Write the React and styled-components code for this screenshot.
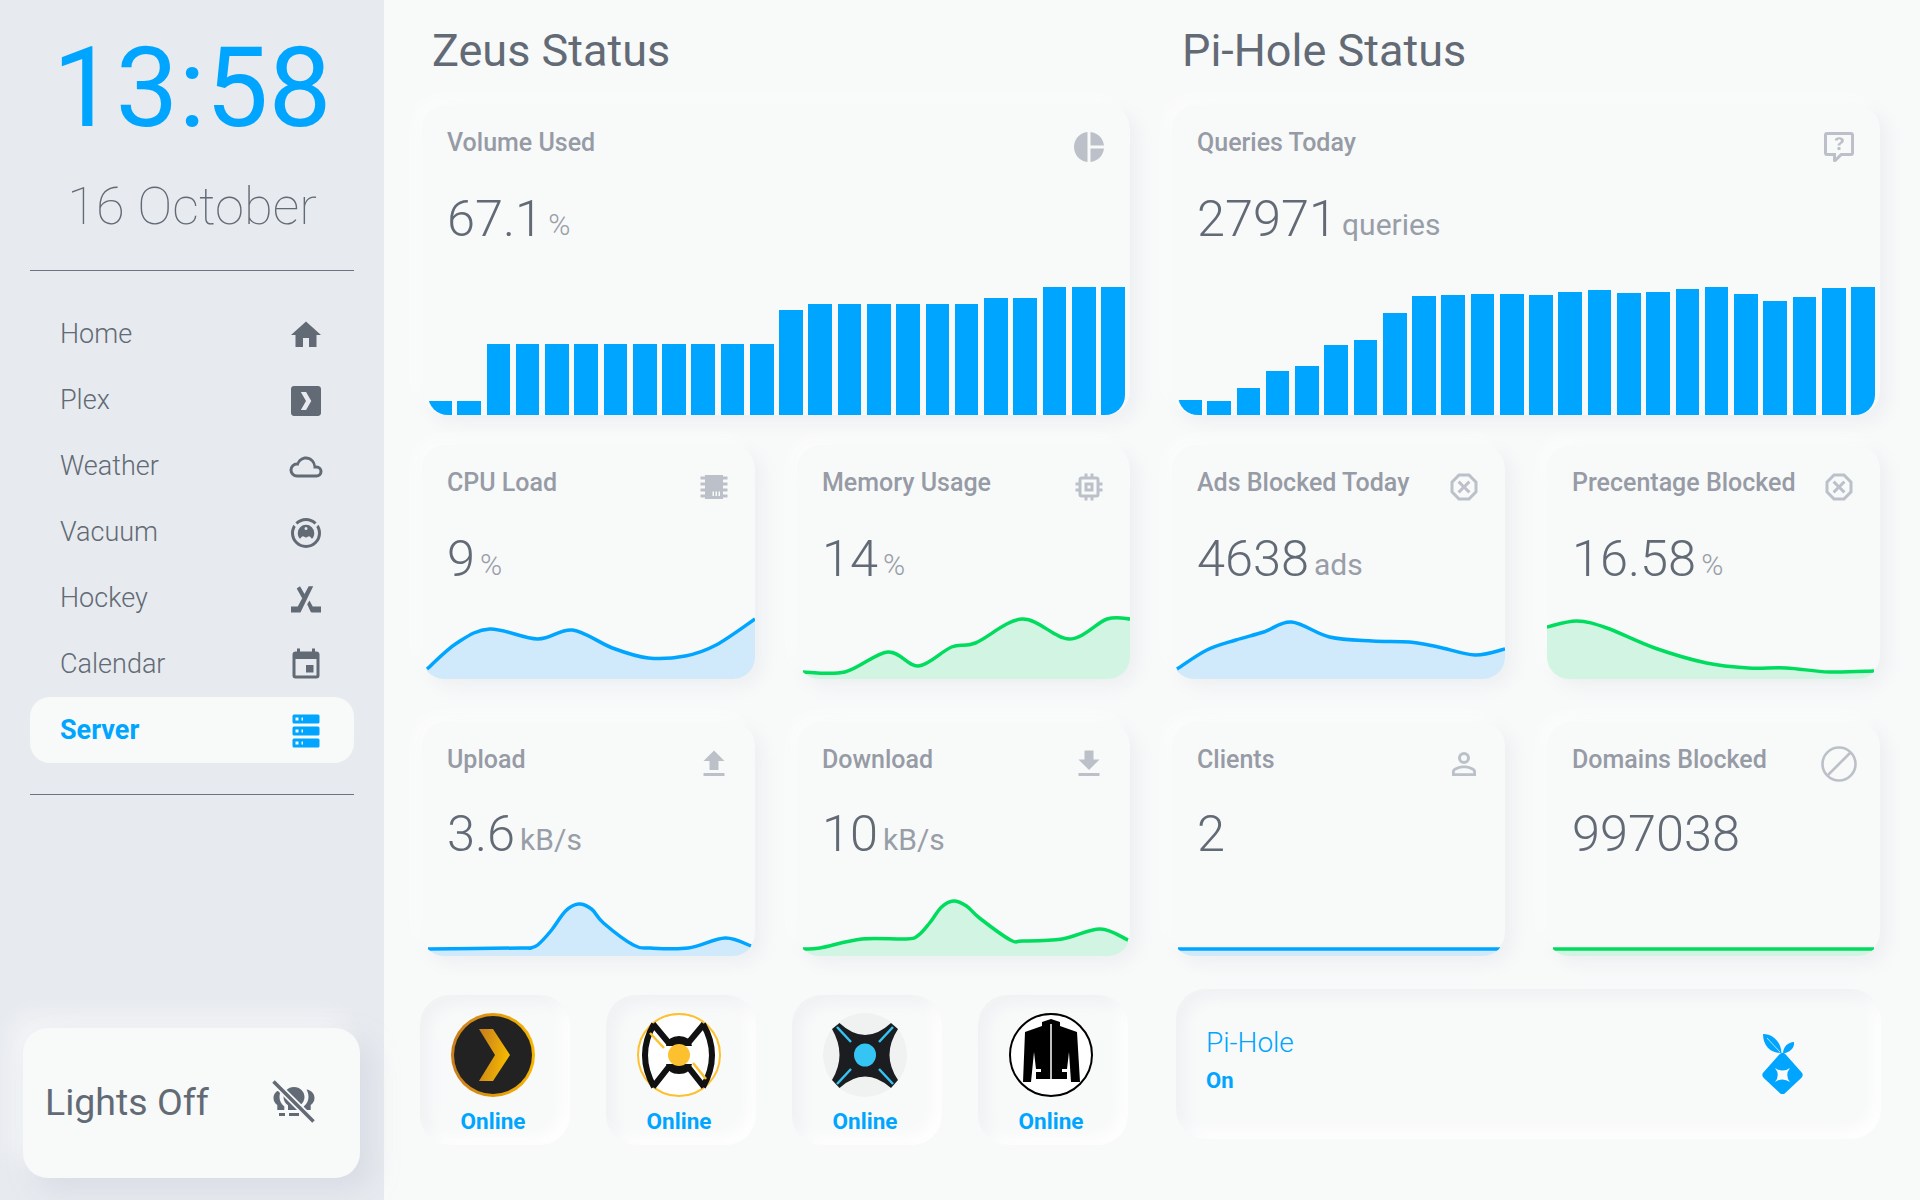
import React from 'react';
import styled, { createGlobalStyle } from 'styled-components';

const BLUE = '#00a5ff';
const GREEN = '#00dc5e';
const INK = '#626a75';
const PAPER = '#f8f9f9';

const GlobalStyle = createGlobalStyle`
    html, body {
        margin: 0;
        padding: 0;
        background: ${PAPER};
        font-family: Roboto, "Liberation Sans", sans-serif;
        overflow: hidden;
    }
`;

const Page = styled.div`
    display: flex;
    width: 1920px;
    height: 1200px;
    background: ${PAPER};
`;

const Sidebar = styled.aside`
    display: flex;
    flex-direction: column;
    flex: 0 0 384px;
    background: #e7eaef;
`;

const Clock = styled.div`
    margin-top: 32px;
    font-size: 112px;
    line-height: 112px;
    text-align: center;
    color: ${BLUE};
`;

const DateLine = styled.div`
    margin-top: 32px;
    font-size: 52.5px;
    line-height: 60px;
    font-weight: 100;
    text-align: center;
    color: ${INK};
`;

const Divider = styled.hr`
    width: 324px;
    height: 1px;
    margin: ${p => p.$top}px 0 ${p => p.$bottom}px 30px;
    border: 0;
    background: #6d7480;
`;

const Nav = styled.nav`
    display: flex;
    flex-direction: column;
    margin-left: 30px;
    width: 324px;
`;

const NavRow = styled.div`
    display: flex;
    align-items: center;
    justify-content: space-between;
    height: 66px;
    padding: 0 30px;
    box-sizing: border-box;
    border-radius: 20px;
    font-size: 27px;
    font-weight: ${p => (p.$active ? 700 : 300)};
    color: ${p => (p.$active ? BLUE : INK)};
    background: ${p => (p.$active ? PAPER : 'transparent')};
    svg {
        margin-top: 2px;
    }
`;

const LightsCard = styled.div`
    display: flex;
    align-items: center;
    justify-content: space-between;
    height: 150px;
    width: 337px;
    margin: auto 0 22px 23px;
    padding: 0 44px 2px 22px;
    box-sizing: border-box;
    border-radius: 25px;
    font-size: 37.5px;
    color: ${INK};
    background: ${PAPER};
    box-shadow: 12px 12px 24px rgba(205, 210, 220, 0.55), -12px -12px 24px rgba(255, 255, 255, 0.55);
`;

const Main = styled.main`
    display: grid;
    grid-template-columns: 708px 708px;
    column-gap: 42px;
    margin-left: 38px;
`;

const Section = styled.section`
    display: flex;
    flex-direction: column;
`;

const Heading = styled.h2`
    margin: 0 0 3px 10px;
    font-size: 45px;
    line-height: 102px;
    font-weight: 400;
    color: ${INK};
`;

const Card = styled.div`
    display: flex;
    flex-direction: column;
    height: ${p => p.$height}px;
    border-radius: 24px;
    background: ${PAPER};
    box-shadow: 7px 7px 16px rgba(190, 198, 212, 0.18), -7px -7px 16px rgba(255, 255, 255, 0.6);
`;

const CardHead = styled.div`
    display: flex;
    align-items: flex-start;
    justify-content: space-between;
    height: 60px;
    padding: 23px 23px 0 25px;
    box-sizing: border-box;
`;

const CardTitle = styled.div`
    font-size: 25px;
    line-height: 30px;
    font-weight: 500;
    white-space: nowrap;
    color: #969ba5;
`;

const IconSlot = styled.div`
    display: flex;
    align-items: center;
    justify-content: center;
    flex: 0 0 36px;
    height: 36px;
    margin-top: 1px;
    color: #bcc1c9;
`;

const Value = styled.div`
    display: flex;
    align-items: baseline;
    margin: ${p => p.$top}px 0 0 25px;
    font-size: 50.5px;
    line-height: 60px;
    font-weight: 300;
    color: ${INK};
`;

const Unit = styled.span`
    margin-left: 5px;
    font-size: 30px;
    font-weight: ${p => (p.$light ? 300 : 400)};
    color: #989ea8;
    transform: translateY(-1.5px);
`;

const BarChart = styled.div`
    display: flex;
    align-items: flex-end;
    justify-content: space-between;
    height: 128px;
    margin: auto 5px 0 6px;
    overflow: hidden;
    border-radius: 0 0 20px 20px;
`;

const Bar = styled.div`
    flex: 0 0 23.7px;
    background: ${BLUE};
`;

const CardGrid = styled.div`
    display: grid;
    grid-template-columns: 333px 333px;
    column-gap: 42px;
    row-gap: 43px;
    margin-top: 30px;
`;

const LineChart = styled.div`
    height: 80px;
    margin-top: auto;
    overflow: hidden;
    border-radius: 0 0 22px 22px;
    svg {
        display: block;
    }
`;

const TileRow = styled.div`
    display: flex;
    justify-content: space-between;
    margin: 39px 2px 0 -2px;
`;

const Tile = styled.div`
    display: flex;
    flex-direction: column;
    align-items: center;
    width: 150px;
    height: 150px;
    padding: 18px 4px 0 0;
    box-sizing: border-box;
    border-radius: 30px;
    background: ${PAPER};
    box-shadow: inset 8px 8px 14px rgba(200, 205, 215, 0.16), inset -8px -8px 14px rgba(255, 255, 255, 0.9);
`;

const TileLabel = styled.div`
    margin-top: 11px;
    font-size: 22.5px;
    line-height: 26px;
    font-weight: 700;
    color: ${BLUE};
`;

const PiTile = styled(Tile)`
    flex-direction: row;
    justify-content: space-between;
    width: 705px;
    margin: 33px 0 0 4px;
    padding: 0 78px 0 30px;
`;

const PiText = styled.div`
    display: flex;
    flex-direction: column;
    margin-bottom: 9px;
    color: ${BLUE};
`;

const PiName = styled.div`
    font-size: 28px;
    line-height: 36px;
    font-weight: 300;
`;

const PiState = styled.div`
    margin-top: 7px;
    font-size: 22px;
    line-height: 26px;
    font-weight: 700;
`;

// material design icon paths, all on a 24 box
const PATHS = {
    home: 'M10,20V14H14V20H19V12H22L12,3L2,12H5V20H10Z',
    plex: 'M4,2C2.89,2 2,2.89 2,4V20C2,21.11 2.89,22 4,22H20C21.11,22 22,21.11 22,20V4C22,2.89 21.11,2 20,2H4M8.56,6H12.06L15.5,12L12.06,18H8.56L12,12L8.56,6Z',
    cloud: 'M6,19A5,5 0 0,1 1,14A5,5 0 0,1 6,9C7,6.65 9.3,5 12,5C15.43,5 18.24,7.66 18.5,11.03L19,11A4,4 0 0,1 23,15A4,4 0 0,1 19,19H6M19,13H17V12A5,5 0 0,0 12,7C9.5,7 7.45,8.82 7.06,11.19C6.73,11.07 6.37,11 6,11A3,3 0 0,0 3,14A3,3 0 0,0 6,17H19A2,2 0 0,0 21,15A2,2 0 0,0 19,13Z',
    vacuum: 'M12,2C14.65,2 17.19,3.06 19.07,4.93L17.65,6.35C16.15,4.85 14.12,4 12,4C9.88,4 7.84,4.84 6.35,6.35L4.93,4.93C6.81,3.06 9.35,2 12,2M3.66,6.5L5.11,7.94C4.39,9.17 4,10.57 4,12A8,8 0 0,0 12,20A8,8 0 0,0 20,12C20,10.57 19.61,9.17 18.88,7.94L20.34,6.5C21.42,8.12 22,10.04 22,12A10,10 0 0,1 12,22A10,10 0 0,1 2,12C2,10.04 2.58,8.12 3.66,6.5M12,6.500A5.500,5.500 0 0,1 17.500,12C17.500,13.600 17,15 16,15.800C15.300,15.200 14.700,14.200 14,14.200C13.300,14.200 13,15 12,15C11,15 10.700,14.200 10,14.200C9.300,14.200 8.700,15.200 8,15.800C7,15 6.500,13.600 6.500,12A5.500,5.500 0 0,1 12,6.500M12,8A1,1 0 0,0 11,9A1,1 0 0,0 12,10A1,1 0 0,0 13,9A1,1 0 0,0 12,8Z',
    hockey: 'M13.800,3.500H16.800L8.300,21H2V17H6.500ZM5.800,5L8,3.500L11.600,9.600L10,12.500ZM12.800,15.500L14.300,13L16.500,17H22V21H16C15.500,21 15.200,20.800 15,20.400Z',
    calendar: 'M19,19H5V8H19M16,1V3H8V1H6V3H5C3.89,3 3,3.89 3,5V19A2,2 0 0,0 5,21H19A2,2 0 0,0 21,19V5C21,3.89 20.1,3 19,3H18V1M17,12H12V17H17V12Z',
    server: 'M4,1H20A1,1 0 0,1 21,2V6A1,1 0 0,1 20,7H4A1,1 0 0,1 3,6V2A1,1 0 0,1 4,1M4,9H20A1,1 0 0,1 21,10V14A1,1 0 0,1 20,15H4A1,1 0 0,1 3,14V10A1,1 0 0,1 4,9M4,17H20A1,1 0 0,1 21,18V22A1,1 0 0,1 20,23H4A1,1 0 0,1 3,22V18A1,1 0 0,1 4,17M9,5H10V3H9V5M9,13H10V11H9V13M9,21H10V19H9V21M5,3V5H7V3H5M5,11V13H7V11H5M5,19V21H7V19H5Z',
    pie: 'M11,2V22C5.9,21.5 2,17.2 2,12C2,6.8 5.9,2.5 11,2M13,2V11H22C21.5,6.2 17.8,2.5 13,2M13,13V22C17.7,21.5 21.5,17.8 22,13H13Z',
    question: 'M4,2A2,2 0 0,0 2,4V16A2,2 0 0,0 4,18H8V21A1,1 0 0,0 9,22H9.5C9.75,22 10,21.9 10.2,21.71L13.9,18H20A2,2 0 0,0 22,16V4C22,2.89 21.1,2 20,2H4M4,4H20V16H13.08L10,19.08V16H4V4M12.19,5.5C11.3,5.5 10.59,5.68 10.05,6.04C9.5,6.4 9.22,7 9.27,7.69H11.24C11.24,7.41 11.34,7.2 11.5,7.06C11.7,6.92 11.92,6.85 12.19,6.85C12.5,6.85 12.77,6.93 12.95,7.11C13.13,7.28 13.22,7.5 13.22,7.8C13.22,8.08 13.14,8.33 13,8.54C12.83,8.76 12.62,8.94 12.36,9.08C11.84,9.4 11.5,9.68 11.29,9.92C11.1,10.16 11,10.5 11,11H13C13,10.72 13.05,10.5 13.14,10.32C13.23,10.15 13.4,10 13.66,9.85C14.12,9.64 14.5,9.36 14.79,9C15.08,8.63 15.23,8.24 15.23,7.8C15.23,7.1 14.96,6.54 14.42,6.12C13.88,5.71 13.13,5.5 12.19,5.5M11,12V14H13V12H11Z',
    chip: 'M6,4H18V5H21V7H18V9H21V11H18V13H21V15H18V17H21V19H18V20H6V19H3V17H6V15H3V13H6V11H3V9H6V7H3V5H6V4M11,15V18H12V15H11M13,15V18H14V15H13M15,15V18H16V15H15Z',
    memory: 'M17,17H7V7H17M21,11V9H19V7C19,5.89 18.1,5 17,5H15V3H13V5H11V3H9V5H7C5.89,5 5,5.89 5,7V9H3V11H5V13H3V15H5V17A2,2 0 0,0 7,19H9V21H11V19H13V21H15V19H17A2,2 0 0,0 19,17V15H21V13H19V11M13,13H11V11H13M15,9H9V15H15V9Z',
    octagon: 'M8.27,3L3,8.27V15.73L8.27,21H15.73L21,15.73V8.27L15.73,3M9.1,5H14.9L19,9.1V14.9L14.9,19H9.1L5,14.9V9.1M9.12,7.71L7.71,9.12L10.59,12L7.71,14.88L9.12,16.29L12,13.41L14.88,16.29L16.29,14.88L13.41,12L16.29,9.12L14.88,7.71L12,10.59',
    upload: 'M9,16V10H5L12,3L19,10H15V16H9M5,20V18H19V20H5Z',
    download: 'M5,20H19V18H5M19,9H15V3H9V9H5L12,16L19,9Z',
    account: 'M12,4A4,4 0 0,1 16,8A4,4 0 0,1 12,12A4,4 0 0,1 8,8A4,4 0 0,1 12,4M12,6A2,2 0 0,0 10,8A2,2 0 0,0 12,10A2,2 0 0,0 14,8A2,2 0 0,0 12,6M12,13C14.67,13 20,14.33 20,17V20H4V17C4,14.33 9.33,13 12,13M12,14.9C9.03,14.9 5.9,16.36 5.9,17V18.1H18.1V17C18.1,16.36 14.97,14.9 12,14.9Z',
};

const Icon = ({ name, size = 36 }) => (
    <svg width={size} height={size} viewBox="0 0 24 24" fill="currentColor">
        <path fillRule={name === 'octagon' ? 'evenodd' : 'nonzero'} d={PATHS[name]} />
    </svg>
);

const CancelIcon = () => (
    <svg width={36} height={36} viewBox="0 0 36 36" fill="none" stroke="currentColor" strokeWidth="2.6">
        <circle cx="18" cy="18" r="16.5" />
        <line x1="7" y1="29" x2="29" y2="7" />
    </svg>
);

const LightsOffIcon = () => (
    <svg width={44} height={44} viewBox="0 0 44 44" fill={INK}>
        <path d="M22 7c-6 0-10.500 4.500-10.500 10 0 3.500 1.800 6.400 4.500 8.200V30h12v-4.800c2.700-1.800 4.500-4.700 4.500-8.200C32.500 11.500 28 7 22 7z" />
        <path d="M9.500 9.500C5 10 1.500 13.500 1.500 18c0 3 1.500 5.500 3.800 7v5h7v-3.500c-3-2.300-4.800-5.600-4.800-9.500 0-2.900 1-5.600 2-7.500z" />
        <path d="M34.500 9.500C39 10 42.500 13.500 42.500 18c0 3-1.500 5.500-3.800 7v5h-7v-3.500c3-2.300 4.800-5.600 4.800-9.500 0-2.900-1-5.600-2-7.500z" />
        <path d="M7 33h6v3H7zM17 33h10v3H17zM31 33h6v3h-6z" />
        <line x1="2" y1="2" x2="42" y2="42" stroke={PAPER} strokeWidth="7" />
        <line x1="1.500" y1="1.500" x2="41.500" y2="41.500" stroke={INK} strokeWidth="3.500" />
    </svg>
);

const PlexLogo = () => (
    <svg width={84} height={84} viewBox="0 0 84 84">
        <defs>
            <linearGradient id="plexRing" x1="0" y1="0" x2="1" y2="0">
                <stop offset="0" stopColor="#c97e1d" />
                <stop offset="1" stopColor="#f6b600" />
            </linearGradient>
            <linearGradient id="plexMark" x1="0" y1="0" x2="1" y2="0.3">
                <stop offset="0" stopColor="#c67a1f" />
                <stop offset="1" stopColor="#f5b900" />
            </linearGradient>
        </defs>
        <circle cx="42" cy="42" r="42" fill="url(#plexRing)" />
        <circle cx="42" cy="42" r="39" fill="#222222" />
        <polygon points="28,16 42,16 59,42 42,68 28,68 44,42" fill="url(#plexMark)" />
    </svg>
);

const RadarrLogo = () => (
    <svg width={84} height={84} viewBox="0 0 84 84" fill="none">
        <circle cx="42" cy="42" r="41" fill="#ffffff" stroke="#fdc02f" strokeWidth="2" />
        <g stroke="#111111" strokeWidth="6" strokeLinejoin="miter">
            <path d="M17 11Q-1 42 17 74" />
            <path d="M66 11Q84 42 66 74" />
            <path d="M16 11L31 29H52L67 11" />
            <path d="M16 74L31 55H52L67 74" />
        </g>
        <path d="M29 33Q31 23 42 23Q53 23 55 33ZM29 51Q31 61 42 61Q53 61 55 51Z" fill="#111111" />
        <path d="M13 20L27 35M56 50L69 66" stroke="#fdc02f" strokeWidth="2.500" />
        <ellipse cx="42" cy="42" rx="11" ry="11" fill="#fdc02f" />
    </svg>
);

const SonarrLogo = () => (
    <svg width={84} height={84} viewBox="0 0 84 84">
        <circle cx="42" cy="42" r="42" fill="#f0f1f1" />
        <path d="M16.500 10Q42 34 68 10L75 16Q58 42 75 67L68 75Q42 52 16.500 75L9 67Q24 42 9 16Z" fill="#1b1d20" />
        <path d="M14 14L28 29M70 14L56 29M14 71L28 56M70 71L56 56" stroke="#35c5f4" strokeWidth="2.500" />
        <ellipse cx="42" cy="42" rx="11" ry="11.500" fill="#35c5f4" />
    </svg>
);

const JacketLogo = () => (
    <svg width={84} height={84} viewBox="0 0 84 84">
        <circle cx="42" cy="42" r="41" fill="#ffffff" stroke="#000000" strokeWidth="2" />
        <path d="M33 9L42 6L51 9V13L68 19L71 69H62L60 39L58 56H53V59H58V66H27V59H32V56H27L25 39L22 69H14L16 19L33 13Z" fill="#000000" />
        <line x1="42" y1="11" x2="42" y2="66" stroke="#ffffff" strokeWidth="1.500" />
    </svg>
);

const PiHoleLogo = () => (
    <svg width={41} height={60} viewBox="0 0 41 60" fill={BLUE}>
        <path d="M1 0C11 0 19 8 19.500 19C9 19.500 1 12 1 0Z" />
        <path d="M5 4L18 18" stroke={PAPER} strokeWidth="0.700" />
        <path d="M32 8C33 14 27 19 21 19.500C21 13 26 8 32 8Z" />
        <polygon points="20.500,23 36.500,41 20.500,56 4.500,41" stroke={BLUE} strokeWidth="8" strokeLinejoin="round" />
        <path d="M13 34Q20.500 39 28 34Q22.500 41 28 48Q20.500 43 13 48Q18.500 41 13 34Z" fill={PAPER} />
    </svg>
);

// catmull-rom through the points, gives the soft line of the graphs
const smooth = points => {
    let d = `M${points[0][0]},${points[0][1]}`;
    for (let i = 0; i < points.length - 1; i++) {
        const p0 = points[i - 1] || points[i];
        const p1 = points[i];
        const p2 = points[i + 1];
        const p3 = points[i + 2] || p2;
        const c1x = p1[0] + (p2[0] - p0[0]) / 6;
        const c1y = p1[1] + (p2[1] - p0[1]) / 6;
        const c2x = p2[0] - (p3[0] - p1[0]) / 6;
        const c2y = p2[1] - (p3[1] - p1[1]) / 6;
        d += `C${c1x},${c1y} ${c2x},${c2y} ${p2[0]},${p2[1]}`;
    }
    return d;
};

const Graph = ({ points, color, fill }) => {
    const line = smooth(points);
    const first = points[0][0];
    const last = points[points.length - 1][0];
    return (
        <LineChart>
            <svg width="100%" height="80" viewBox="0 0 334 80" preserveAspectRatio="none">
                <path d={`${line}L${last},80L${first},80Z`} fill={fill} />
                <path d={line} fill="none" stroke={color} strokeWidth="3.5" />
            </svg>
        </LineChart>
    );
};

const BLUE_FILL = '#d0e9fb';
const GREEN_FILL = '#d2f4e2';

const navItems = [
    ['Home', 'home'],
    ['Plex', 'plex'],
    ['Weather', 'cloud'],
    ['Vacuum', 'vacuum'],
    ['Hockey', 'hockey'],
    ['Calendar', 'calendar'],
    ['Server', 'server'],
];

const volumeBars = [14, 14, 71, 71, 71, 71, 71, 71, 71, 71, 71, 71, 105, 111, 111, 111, 111, 111, 111, 117, 117, 128, 128, 128];
const queryBars = [15, 14, 27, 44, 49, 70, 75, 102, 119, 120, 121, 121, 120, 123, 125, 122, 123, 126, 128, 121, 114, 118, 127, 128];

const zeusCards = [
    {
        title: 'CPU Load', icon: 'chip', value: '9', unit: '%', top: 24, color: BLUE, fill: BLUE_FILL,
        points: [[5, 70], [35, 44], [68, 30], [116, 40], [151, 31], [191, 49], [227, 59], [264, 57], [295, 46], [334, 20]],
    },
    {
        title: 'Memory Usage', icon: 'memory', value: '14', unit: '%', top: 24, color: GREEN, fill: GREEN_FILL,
        points: [[6, 73], [48, 73], [91, 53], [122, 67], [155, 48], [179, 44], [226, 20], [273, 40], [311, 20], [334, 20]],
    },
    {
        title: 'Upload', icon: 'upload', value: '3.6', unit: 'kB/s', top: 22, color: BLUE, fill: BLUE_FILL,
        points: [[6, 73], [100, 72], [108, 72], [116, 69], [130, 54], [144, 35], [157, 28], [170, 33], [182, 47], [212, 69], [229, 72], [267, 72], [304, 62], [330, 70]],
    },
    {
        title: 'Download', icon: 'download', value: '10', unit: 'kB/s', top: 22, color: GREEN, fill: GREEN_FILL,
        points: [[6, 73], [23, 72], [65, 63], [110, 63], [122, 59], [133, 47], [145, 31], [157, 25], [170, 30], [183, 42], [214, 64], [226, 65], [266, 63], [304, 53], [332, 64]],
    },
];

const piCards = [
    {
        title: 'Ads Blocked Today', icon: 'octagon', value: '4638', unit: 'ads', top: 24, color: BLUE, fill: BLUE_FILL,
        points: [[5, 70], [35, 51], [64, 41], [92, 33], [120, 23], [158, 38], [201, 42], [238, 43], [267, 48], [304, 56], [334, 50]],
    },
    {
        title: 'Precentage Blocked', icon: 'octagon', value: '16.58', unit: '%', top: 24, color: GREEN, fill: GREEN_FILL,
        points: [[0, 28], [30, 22], [60, 29], [108, 49], [160, 64], [202, 69], [240, 69], [283, 73], [328, 72]],
    },
    {
        title: 'Clients', icon: 'account', value: '2', top: 22, color: BLUE, fill: BLUE_FILL,
        points: [[6, 73], [329, 73]],
    },
    {
        title: 'Domains Blocked', cancel: true, value: '997038', top: 22, color: GREEN, fill: GREEN_FILL,
        points: [[6, 73], [328, 73]],
    },
];

const StatCard = ({ title, icon, cancel, value, unit, top, points, color, fill }) => (
    <Card $height={234}>
        <CardHead>
            <CardTitle>{title}</CardTitle>
            <IconSlot>{cancel ? <CancelIcon /> : <Icon name={icon} />}</IconSlot>
        </CardHead>
        <Value $top={top}>
            {value}
            {unit && <Unit $light={unit === '%'}>{unit}</Unit>}
        </Value>
        <Graph points={points} color={color} fill={fill} />
    </Card>
);

const BarCard = ({ title, icon, value, unit, bars }) => (
    <Card $height={310}>
        <CardHead>
            <CardTitle>{title}</CardTitle>
            <IconSlot><Icon name={icon} /></IconSlot>
        </CardHead>
        <Value $top={24}>
            {value}
            <Unit $light={unit === '%'}>{unit}</Unit>
        </Value>
        <BarChart>
            {bars.map((h, i) => (
                <Bar key={i} style={{ height: h }} />
            ))}
        </BarChart>
    </Card>
);

export default function App() {
    return (
        <Page>
            <GlobalStyle />
            <Sidebar>
                <Clock>13:58</Clock>
                <DateLine>16 October</DateLine>
                <Divider $top={34} $bottom={30} />
                <Nav>
                    {navItems.map(([label, icon]) => (
                        <NavRow key={label} $active={label === 'Server'}>
                            {label}
                            <Icon name={icon} />
                        </NavRow>
                    ))}
                </Nav>
                <Divider $top={31} $bottom={0} />
                <LightsCard>
                    Lights Off
                    <LightsOffIcon />
                </LightsCard>
            </Sidebar>
            <Main>
                <Section>
                    <Heading>Zeus Status</Heading>
                    <BarCard title="Volume Used" icon="pie" value="67.1" unit="%" bars={volumeBars} />
                    <CardGrid>
                        {zeusCards.map(c => <StatCard key={c.title} {...c} />)}
                    </CardGrid>
                    <TileRow>
                        <Tile><PlexLogo /><TileLabel>Online</TileLabel></Tile>
                        <Tile><RadarrLogo /><TileLabel>Online</TileLabel></Tile>
                        <Tile><SonarrLogo /><TileLabel>Online</TileLabel></Tile>
                        <Tile><JacketLogo /><TileLabel>Online</TileLabel></Tile>
                    </TileRow>
                </Section>
                <Section>
                    <Heading>Pi-Hole Status</Heading>
                    <BarCard title="Queries Today" icon="question" value="27971" unit="queries" bars={queryBars} />
                    <CardGrid>
                        {piCards.map(c => <StatCard key={c.title} {...c} />)}
                    </CardGrid>
                    <PiTile>
                        <PiText>
                            <PiName>Pi-Hole</PiName>
                            <PiState>On</PiState>
                        </PiText>
                        <PiHoleLogo />
                    </PiTile>
                </Section>
            </Main>
        </Page>
    );
}
